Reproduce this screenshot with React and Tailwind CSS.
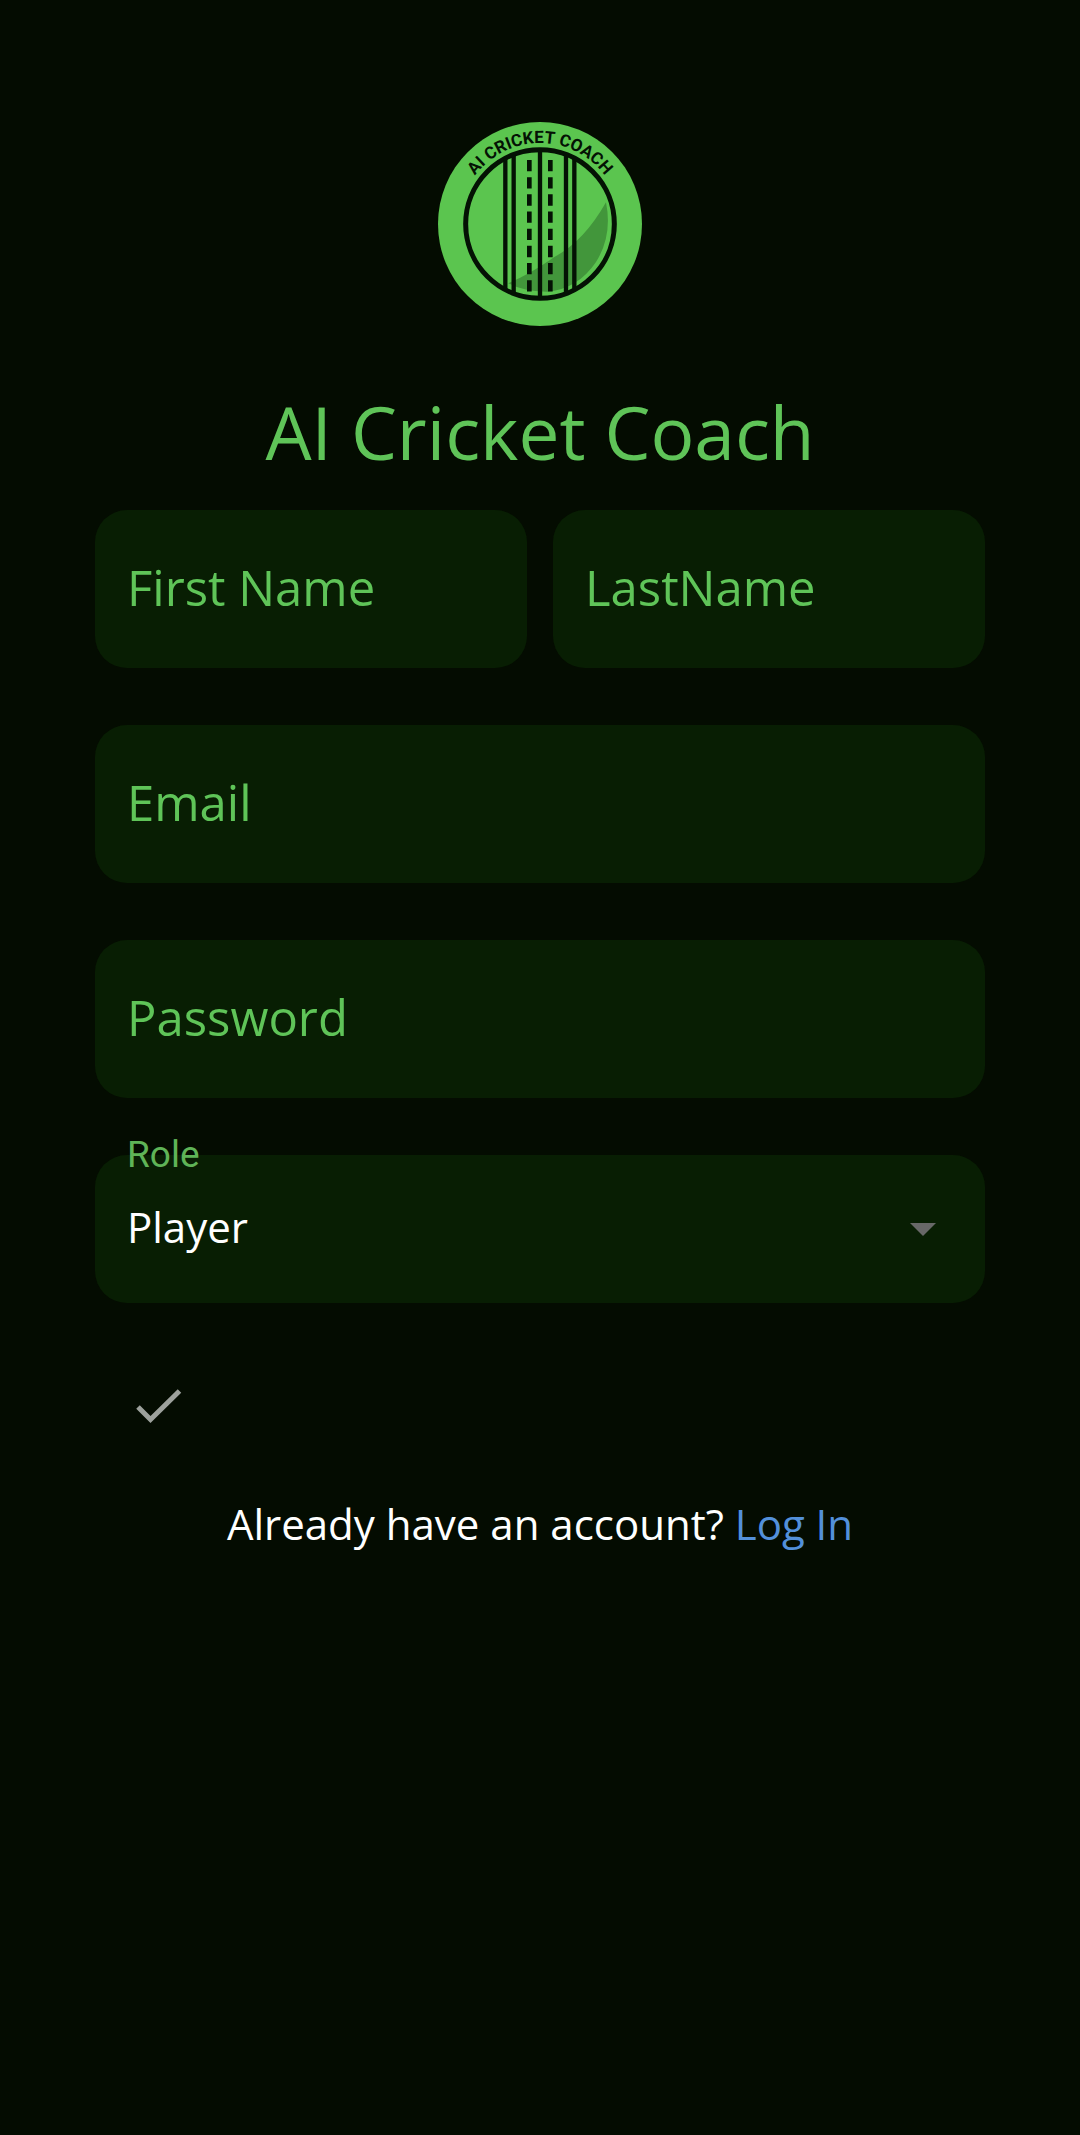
import React from "react";

const fieldClass =
  "block h-[158px] w-full min-w-0 flex-1 rounded-[32px] bg-[#081e03] px-8 pb-1 text-[49px] leading-[72px] text-[#5fc458] outline-none placeholder:text-[#5fc458] placeholder:opacity-100";

function Logo() {
  return (
    <svg viewBox="0 0 612 612" className="size-[204px]" role="img" aria-label="AI Cricket Coach logo">
      <defs>
        <path id="logo-arc" d="M63 306 A243 243 0 0 1 549 306" />
      </defs>
      <circle cx="306" cy="306" r="306" fill="#5bc54f" />
      <path d="M504 241 Q438 358 349 405 Q280 454 211 484 Q260 510 330 509 Q420 500 474 420 Q524 340 504 241 Z" fill="#42963b" />
      <g stroke="#041204" strokeWidth="13" fill="none">
        <circle cx="306" cy="306" r="223" strokeWidth="15" />
        <path d="M202 108V504 M227 98V514 M306 84V528 M384 98V514 M409 108V504" />
        <path d="M274 114V510 M337 114V510" strokeWidth="14" strokeDasharray="34 17.5" />
      </g>
      <text fill="#041204" fontFamily="Roboto, sans-serif" fontSize="51" fontWeight="700" textAnchor="middle">
        <textPath href="#logo-arc" startOffset="50%">AI CRICKET COACH</textPath>
      </text>
    </svg>
  );
}

function Field({ id, label, type = "text" }) {
  return <input id={id} name={id} type={type} aria-label={label} placeholder={label} className={fieldClass} />;
}

export default function App() {
  return (
    <main className="flex min-h-screen flex-col items-center bg-[#040c01] px-[95px] pt-[122px] font-['Open_Sans',sans-serif]">
      <Logo />
      <h1 className="mt-[58px] text-center text-[73px] leading-[96px] font-medium text-[#5fc458]">AI Cricket Coach</h1>
      <form className="mt-[30px] flex w-full flex-col gap-[57px]" onSubmit={(e) => e.preventDefault()}>
        <div className="flex gap-[26px]">
          <Field id="first-name" label="First Name" />
          <Field id="last-name" label="LastName" />
        </div>
        <div className="flex">
          <Field id="email" label="Email" type="email" />
        </div>
        <div className="flex">
          <Field id="password" label="Password" type="password" />
        </div>
        <div className="relative">
          <label htmlFor="role" className="absolute -top-6 left-8 font-['Roboto',sans-serif] text-[37px] leading-[48px] text-[#5fb457]">
            Role
          </label>
          <select
            id="role"
            defaultValue="Player"
            className="block h-[148px] w-full appearance-none rounded-[32px] bg-[#081e03] px-8 pb-1 text-[42px] leading-[56px] text-white outline-none"
          >
            <option>Player</option>
            <option>Coach</option>
          </select>
          <svg viewBox="0 0 26 13" className="pointer-events-none absolute top-[68px] right-[49px] h-[13px] w-[26px]" aria-hidden="true">
            <path d="M0 0H26L13 13Z" fill="#686868" />
          </svg>
        </div>
        <button type="submit" aria-label="Sign up" className="mt-[14px] ml-8 flex size-16 items-center justify-center self-start text-[#9da19c]">
          <svg viewBox="0 0 46 35" className="h-[35px] w-[46px]" fill="none" stroke="currentColor" strokeWidth="5" aria-hidden="true">
            <path d="M2 18L14.500 30.500L43.500 2" />
          </svg>
        </button>
      </form>
      <p className="mt-[58px] text-center text-[42px] leading-[56px] text-white">
        Already have an account? <a href="#login" className="text-[#5390da]">Log In</a>
      </p>
    </main>
  );
}
